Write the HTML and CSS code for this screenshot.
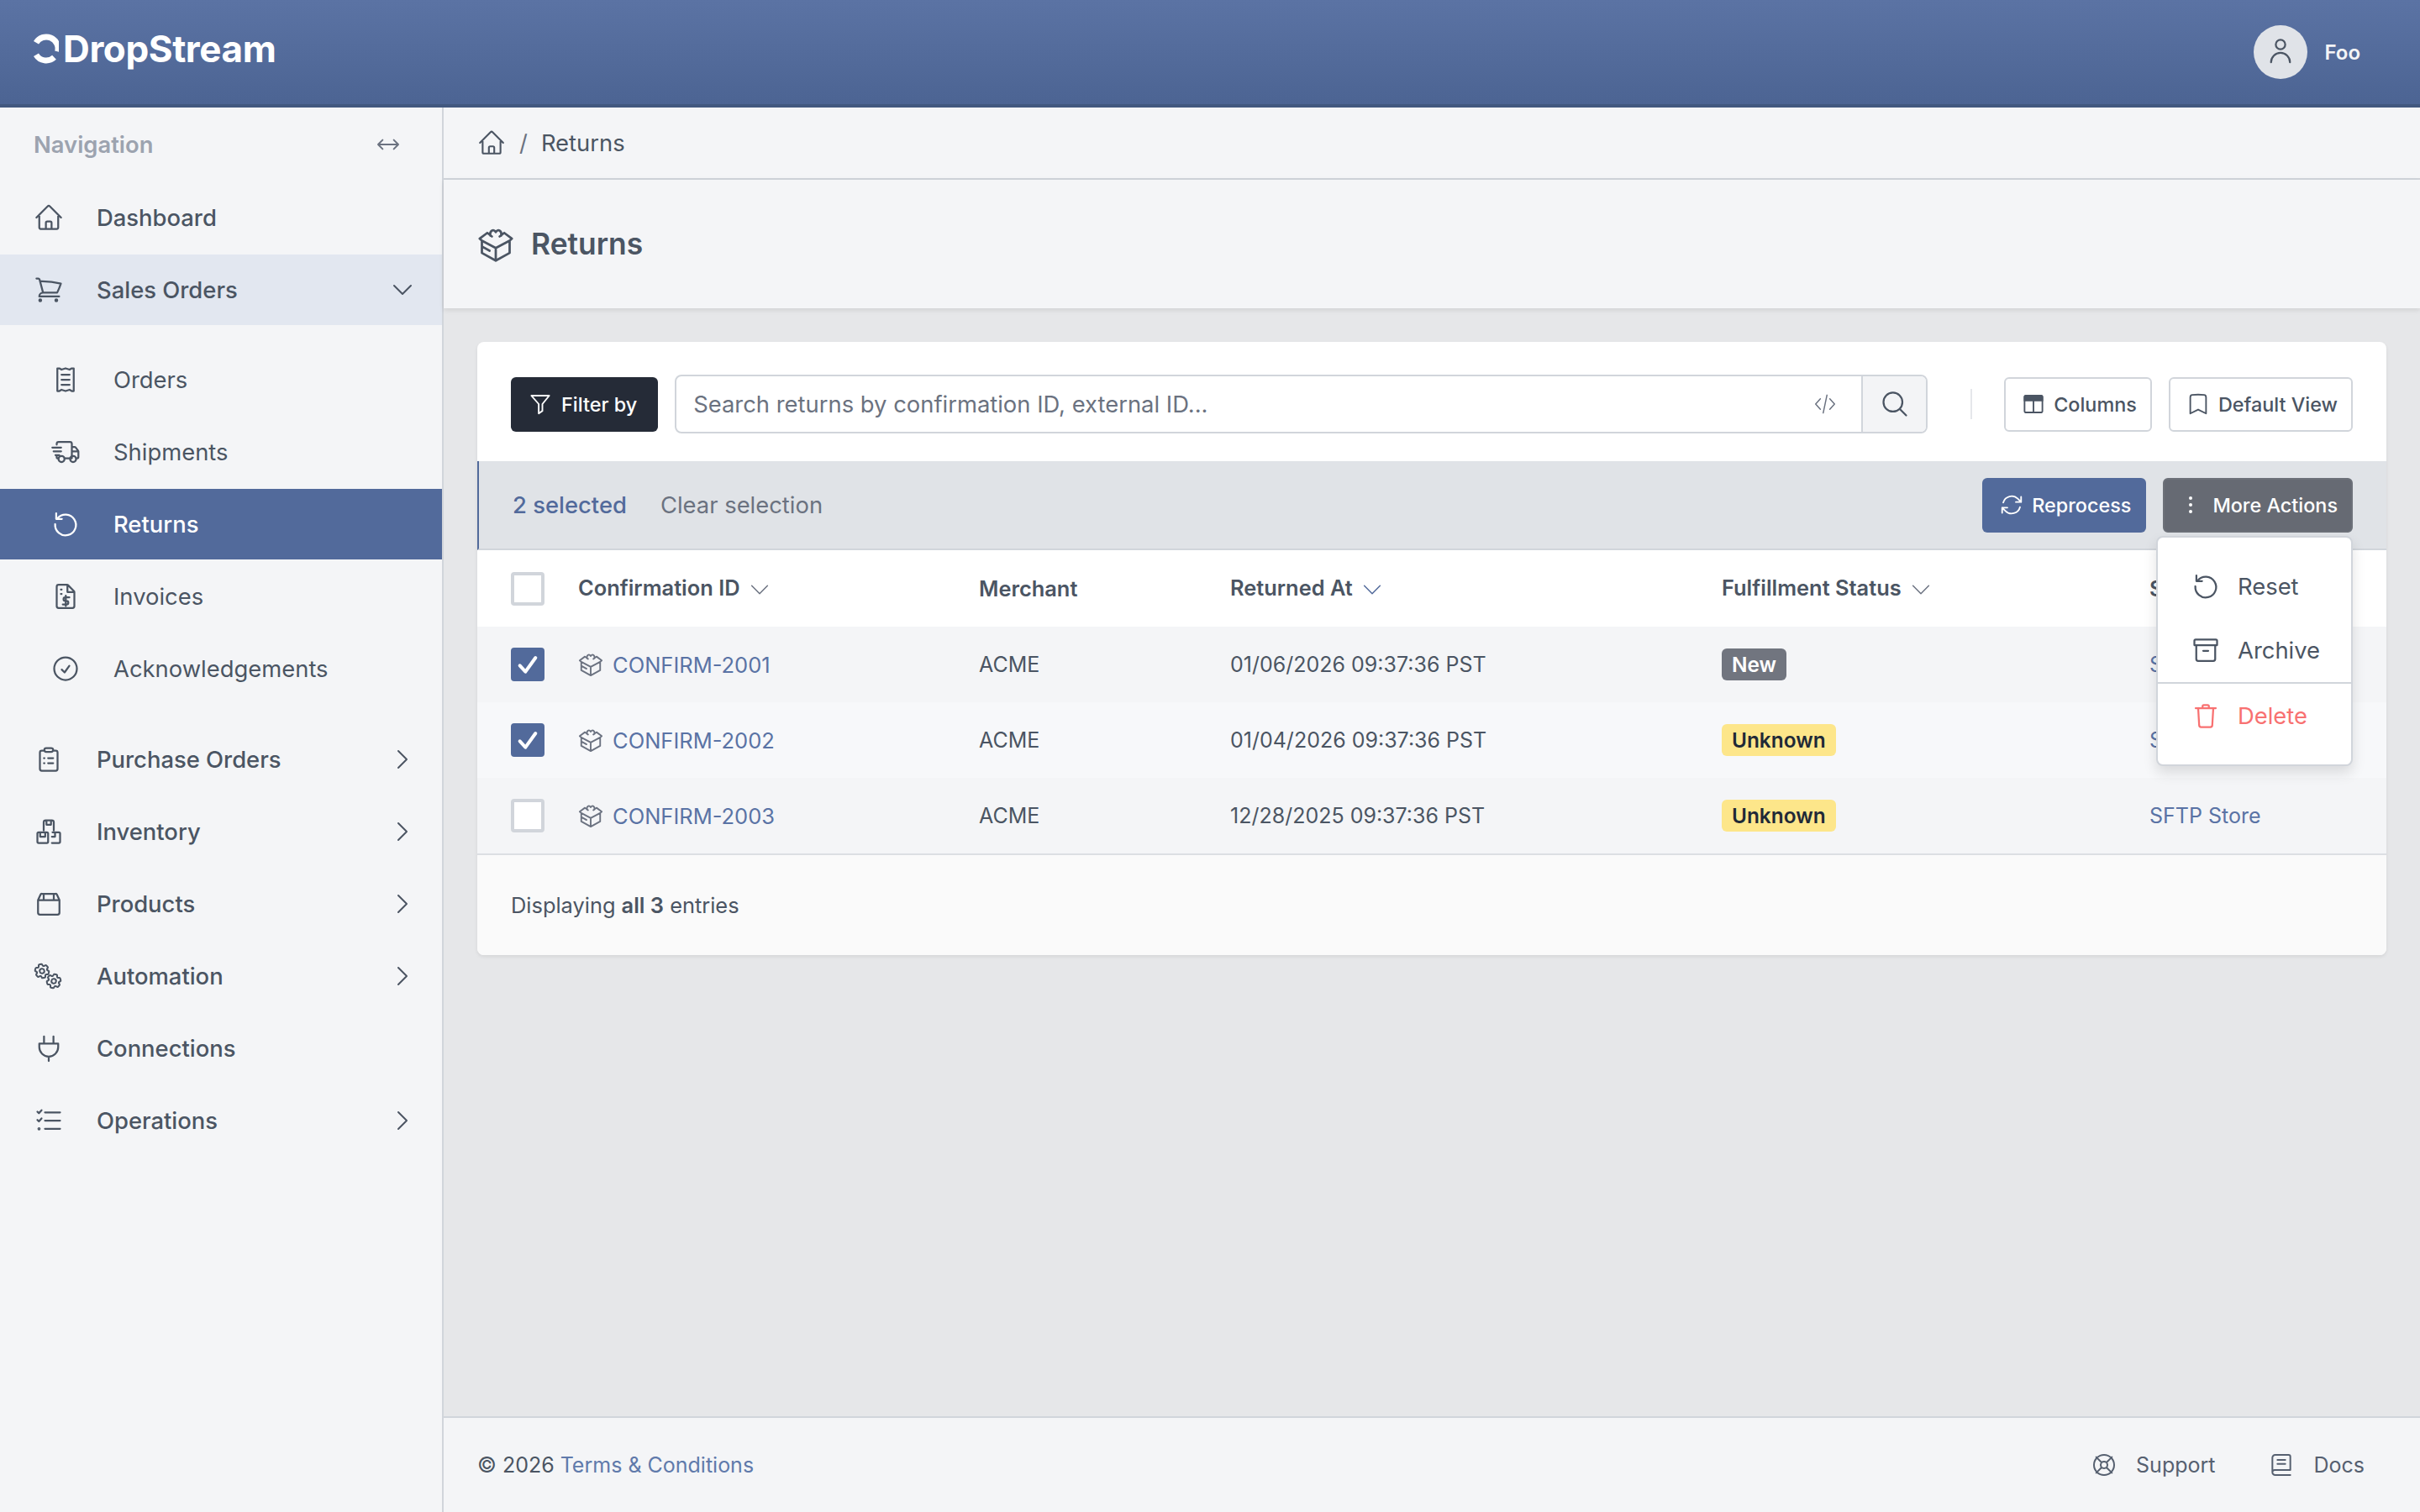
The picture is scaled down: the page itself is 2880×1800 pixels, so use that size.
FILE: index.html
```html
<!DOCTYPE html>
<html lang="en">
<head>
    <meta charset="UTF-8">
    <title>Returns - DropStream</title>
    <link rel="stylesheet" href="styles.css">
</head>
<body>
    <!-- icon sprite -->
    <svg class="icon-defs" xmlns="http://www.w3.org/2000/svg">
        <symbol id="i-home" viewBox="0 0 24 24"><path d="m2.25 12 8.954-8.955c.44-.439 1.152-.439 1.591 0L21.75 12M4.5 9.75v10.125c0 .621.504 1.125 1.125 1.125H9.75v-4.875c0-.621.504-1.125 1.125-1.125h2.25c.621 0 1.125.504 1.125 1.125V21h4.125c.621 0 1.125-.504 1.125-1.125V9.75M8.25 21h8.25"/></symbol>
        <symbol id="i-cart" viewBox="0 0 24 24"><path d="M2.25 3h1.386c.51 0 .955.343 1.087.835l.383 1.437M7.5 14.25a3 3 0 0 0-3 3h15.75m-12.75-3h11.218c1.121-2.3 2.1-4.684 2.924-7.138a60.114 60.114 0 0 0-16.536-1.84M7.5 14.25 5.106 5.272M6 20.25a.75.75 0 1 1-1.5 0 .75.75 0 0 1 1.5 0Zm12.75 0a.75.75 0 1 1-1.5 0 .75.75 0 0 1 1.5 0Z"/></symbol>
        <symbol id="i-receipt" viewBox="0 0 24 24"><path d="M5.5 3h1.6l1.7 1L12 3l3.2 1 1.7-1h1.6v18h-1.6l-1.7-1-3.2 1-3.2-1-1.7 1H5.5zM8.8 8h6.4M8.8 12h6.4M8.8 16h6.4"/></symbol>
        <symbol id="i-truck" viewBox="0 0 24 24"><path d="M5 6.2V5.5A1.5 1.5 0 0 1 6.5 4h9A1.5 1.5 0 0 1 17 5.5V17h-5.5M5 15v1.5a.5.5 0 0 0 .5.5H6M17 8h2.2a1 1 0 0 1 .8.4l2 2.7a1 1 0 0 1 .2.6v4.3a1 1 0 0 1-1 1h-.7M17 11.5h5M1.5 8.5h7M2.5 11.5h6M4 14.5h3"/><circle cx="8.8" cy="17.6" r="2.4"/><circle cx="18" cy="17.6" r="2.4"/></symbol>
        <symbol id="i-return" viewBox="0 0 24 24"><path d="M5.6 7.4A8.25 8.25 0 1 1 3.75 12M4.6 3.4v4.5h4.5"/></symbol>
        <symbol id="i-invoice" viewBox="0 0 24 24"><path d="M6.5 2.8h6.8a1 1 0 0 1 .7.3l4.7 4.7a1 1 0 0 1 .3.7v11.2a1.5 1.5 0 0 1-1.5 1.5h-11A1.5 1.5 0 0 1 5 19.7V4.3a1.5 1.5 0 0 1 1.5-1.5zM13.5 3v5.5H19M8.3 6.5h.6M8.3 10h.6M15 12.8h-3.2a1.4 1.4 0 0 0 0 2.8h1a1.4 1.4 0 0 1 0 2.8H9.8M12.2 11.4v8.2"/></symbol>
        <symbol id="i-check-circle" viewBox="0 0 24 24"><path d="M9 12.75 11.25 15 15 9.75M21 12a9 9 0 1 1-18 0 9 9 0 0 1 18 0Z"/></symbol>
        <symbol id="i-clipboard" viewBox="0 0 24 24"><path d="M8.5 5H6.5A1.5 1.5 0 0 0 5 6.5v13A1.5 1.5 0 0 0 6.5 21h11a1.5 1.5 0 0 0 1.5-1.5v-13A1.5 1.5 0 0 0 17.5 5h-2M8.5 4.5A1.5 1.5 0 0 1 10 3h4a1.5 1.5 0 0 1 1.5 1.5v0A1.5 1.5 0 0 1 14 6h-4a1.5 1.5 0 0 1-1.5-1.5zM11.5 11h4M11.5 15h4M8.2 11h.4M8.2 15h.4"/></symbol>
        <symbol id="i-boxes" viewBox="0 0 24 24"><path d="M8 11V4.5A1.5 1.5 0 0 1 9.5 3h5A1.5 1.5 0 0 1 16 4.5V11M10.2 3v3.5h3.6V3M3 13.5a1 1 0 0 1 1-1h6.5a1 1 0 0 1 1 1V20a1 1 0 0 1-1 1H4a1 1 0 0 1-1-1zM5.2 12.5V16h4v-3.5M15 12.5h5a1 1 0 0 1 1 1V20a1 1 0 0 1-1 1h-5.5M17 12.5V16h-2.5"/></symbol>
        <symbol id="i-box" viewBox="0 0 24 24"><path d="M6.5 4h11a1 1 0 0 1 1 .7L20.5 9v10a1.5 1.5 0 0 1-1.5 1.5H5A1.5 1.5 0 0 1 3.5 19V9l2-4.3a1 1 0 0 1 1-.7zM3.5 9h17M8 4v5M16 4v5"/></symbol>
        <symbol id="i-cog" viewBox="0 0 24 24"><path d="M9.594 3.94c.09-.542.56-.94 1.11-.94h2.593c.55 0 1.02.398 1.11.94l.213 1.281c.063.374.313.686.645.87.074.04.147.083.22.127.325.196.72.257 1.075.124l1.217-.456a1.125 1.125 0 0 1 1.37.49l1.296 2.247a1.125 1.125 0 0 1-.26 1.431l-1.003.827c-.293.241-.438.613-.43.992a7.723 7.723 0 0 1 0 .255c-.008.378.137.75.43.991l1.004.827c.424.35.534.955.26 1.43l-1.298 2.247a1.125 1.125 0 0 1-1.369.491l-1.217-.456c-.355-.133-.75-.072-1.076.124a6.47 6.47 0 0 1-.22.128c-.331.183-.581.495-.644.869l-.213 1.281c-.09.543-.56.94-1.11.94h-2.594c-.55 0-1.019-.398-1.11-.94l-.213-1.281c-.062-.374-.312-.686-.644-.87a6.52 6.52 0 0 1-.22-.127c-.325-.196-.72-.257-1.076-.124l-1.217.456a1.125 1.125 0 0 1-1.369-.49l-1.297-2.247a1.125 1.125 0 0 1 .26-1.431l1.004-.827c.292-.24.437-.613.43-.991a6.932 6.932 0 0 1 0-.255c.007-.38-.138-.751-.43-.992l-1.004-.827a1.125 1.125 0 0 1-.26-1.43l1.297-2.247a1.125 1.125 0 0 1 1.37-.491l1.216.456c.356.133.751.072 1.076-.124.072-.044.146-.086.22-.128.332-.183.582-.495.644-.869l.214-1.28Z"/><path d="M15 12a3 3 0 1 1-6 0 3 3 0 0 1 6 0Z"/></symbol>
        <symbol id="i-cogs" viewBox="0 0 36 36"><use href="#i-cog" x="-1" y="1" width="22" height="22" stroke-width="2.2" transform="rotate(-15 10 12)"/><use href="#i-cog" x="13" y="13" width="22" height="22" stroke-width="2.2" transform="rotate(15 24 24)"/></symbol>
        <symbol id="i-plug" viewBox="0 0 24 24"><path d="M4.5 8.25h15V11a7.5 7.5 0 0 1-15 0zM8.25 2.5v5.75M15.75 2.5v5.75M12 18.5V22"/></symbol>
        <symbol id="i-checklist" viewBox="0 0 24 24"><path d="M9 5.5h12M9 12h12M9 18.5h12M3 5l1.2 1.2L6.3 3.8M3 11.5l1.2 1.2 2.1-2.4"/><circle cx="4.3" cy="18.5" r=".5"/></symbol>
        <symbol id="i-right" viewBox="0 0 24 24"><path d="m8.25 4.5 7.5 7.5-7.5 7.5"/></symbol>
        <symbol id="i-down" viewBox="0 0 24 24"><path d="m19.5 8.25-7.5 7.5-7.5-7.5"/></symbol>
        <symbol id="i-leftright" viewBox="0 0 24 24"><path d="M3 12h18M7 8l-4 4 4 4M17 8l4 4-4 4"/></symbol>
        <symbol id="i-package" viewBox="0 0 24 24"><path d="M12 22.5 3 17.5v-8l9 4.8 9-4.800v8zM12 14.300v8.200M3 9.500 1.500 8.200l5-3.700 3 2.300M21 9.500l1.500-1.300-5-3.700-3 2.300M3 13.300l5 2.800M8.500 6.300C7.800 3.200 10.500 1.500 12 4c1.500-2.500 4.200-.8 3.500 2.300"/></symbol>
        <symbol id="i-filter" viewBox="0 0 24 24"><path d="M3.5 4h17L14 12v6.500L10.500 21v-9z"/></symbol>
        <symbol id="i-code" viewBox="0 0 24 24"><path d="M7.500 7 3 12l4.500 5M16.500 7 21 12l-4.500 5M13.800 3.500l-3.600 17"/></symbol>
        <symbol id="i-search" viewBox="0 0 24 24"><path d="m21 21-5.197-5.197m0 0A7.5 7.5 0 1 0 5.196 5.196a7.5 7.5 0 0 0 10.607 10.607Z"/></symbol>
        <symbol id="i-columns" viewBox="0 0 24 24"><path d="M5 4h14a1.500 1.500 0 0 1 1.500 1.500v13A1.500 1.500 0 0 1 19 20H5a1.500 1.500 0 0 1-1.500-1.500v-13A1.500 1.500 0 0 1 5 4zM12 8.500V20"/><path class="icon-solid" d="M3.500 5.500A1.500 1.500 0 0 1 5 4h14a1.500 1.500 0 0 1 1.500 1.500v3.200h-17z"/></symbol>
        <symbol id="i-bookmark" viewBox="0 0 24 24"><path d="M17.593 3.322c1.1.128 1.907 1.077 1.907 2.185V21L12 17.25 4.5 21V5.507c0-1.108.806-2.057 1.907-2.185a48.507 48.507 0 0 1 11.186 0Z"/></symbol>
        <symbol id="i-refresh" viewBox="0 0 24 24"><path d="M16.023 9.348h4.992v-.001M2.985 19.644v-4.992m0 0h4.992m-4.993 0 3.181 3.183a8.25 8.25 0 0 0 13.803-3.7M4.031 9.865a8.25 8.25 0 0 1 13.803-3.7l3.181 3.182m0-4.991v4.99"/></symbol>
        <symbol id="i-archive" viewBox="0 0 24 24"><path d="M4 3.500h16a1 1 0 0 1 1 1V8H3V4.500a1 1 0 0 1 1-1zM4.500 8v11A1.500 1.500 0 0 0 6 20.500h12a1.500 1.500 0 0 0 1.500-1.500V8M10 12.500h4"/></symbol>
        <symbol id="i-trash" viewBox="0 0 24 24"><path d="M4 6h16M9.500 6V4.500a1 1 0 0 1 1-1h3a1 1 0 0 1 1 1V6M6 6l.8 13.500A1.500 1.500 0 0 0 8.300 21h7.400a1.500 1.500 0 0 0 1.500-1.500L18 6"/></symbol>
        <symbol id="i-user" viewBox="0 0 24 24"><path d="M15.75 6a3.75 3.75 0 1 1-7.5 0 3.75 3.75 0 0 1 7.5 0ZM4.5 20.100a7.500 7.500 0 0 1 15 0"/></symbol>
        <symbol id="i-support" viewBox="0 0 24 24"><path d="M21 12a9 9 0 1 1-18 0 9 9 0 0 1 18 0ZM15 12a3 3 0 1 1-6 0 3 3 0 0 1 6 0ZM5 5l4.800 4.800M19 5l-4.800 4.800M5 19l4.800-4.800M19 19l-4.800-4.800"/></symbol>
        <symbol id="i-book" viewBox="0 0 24 24"><path d="M20 16.500v-12A1.500 1.500 0 0 0 18.500 3h-12A2.500 2.500 0 0 0 4 5.500v13A2.500 2.500 0 0 0 6.500 21H20M4 18.500a2 2 0 0 1 2-2h14M8.500 7.500h7M8.500 11h7"/></symbol>
    </svg>

    <!-- top bar -->
    <header class="topbar">
        <div class="brand">
            <svg class="brand-mark" viewBox="0 0 30 36"><path d="M3 10.800A14 14 0 0 1 28.600 21.400"/><path d="M24.500 28.300A14 14 0 0 1 3 25.200"/></svg>
            <span class="brand-name">DropStream</span>
        </div>
        <div class="account">
            <span class="avatar"><svg class="icon"><use href="#i-user"/></svg></span>
            <span class="account-name">Foo</span>
        </div>
    </header>

    <div class="layout">
        <!-- sidebar -->
        <aside class="sidebar">
            <div class="nav-title">
                <span>Navigation</span>
                <svg class="icon nav-toggle"><use href="#i-leftright"/></svg>
            </div>
            <nav class="nav-list">
                <a class="nav-item"><svg class="icon"><use href="#i-home"/></svg><span>Dashboard</span></a>
                <a class="nav-item nav-open"><svg class="icon"><use href="#i-cart"/></svg><span>Sales Orders</span><svg class="icon nav-chevron"><use href="#i-down"/></svg></a>
                <div class="nav-sub">
                    <a class="nav-item"><svg class="icon"><use href="#i-receipt"/></svg><span>Orders</span></a>
                    <a class="nav-item"><svg class="icon"><use href="#i-truck"/></svg><span>Shipments</span></a>
                    <a class="nav-item nav-active"><svg class="icon"><use href="#i-return"/></svg><span>Returns</span></a>
                    <a class="nav-item"><svg class="icon"><use href="#i-invoice"/></svg><span>Invoices</span></a>
                    <a class="nav-item"><svg class="icon"><use href="#i-check-circle"/></svg><span>Acknowledgements</span></a>
                </div>
                <a class="nav-item"><svg class="icon"><use href="#i-clipboard"/></svg><span>Purchase Orders</span><svg class="icon nav-chevron"><use href="#i-right"/></svg></a>
                <a class="nav-item"><svg class="icon"><use href="#i-boxes"/></svg><span>Inventory</span><svg class="icon nav-chevron"><use href="#i-right"/></svg></a>
                <a class="nav-item"><svg class="icon"><use href="#i-box"/></svg><span>Products</span><svg class="icon nav-chevron"><use href="#i-right"/></svg></a>
                <a class="nav-item"><svg class="icon"><use href="#i-cogs"/></svg><span>Automation</span><svg class="icon nav-chevron"><use href="#i-right"/></svg></a>
                <a class="nav-item"><svg class="icon"><use href="#i-plug"/></svg><span>Connections</span></a>
                <a class="nav-item"><svg class="icon"><use href="#i-checklist"/></svg><span>Operations</span><svg class="icon nav-chevron"><use href="#i-right"/></svg></a>
            </nav>
        </aside>

        <main class="main">
            <div class="breadcrumb">
                <svg class="icon"><use href="#i-home"/></svg>
                <span class="crumb-sep">/</span>
                <span>Returns</span>
            </div>
            <div class="page-head">
                <svg class="icon page-icon"><use href="#i-package"/></svg>
                <h1>Returns</h1>
            </div>

            <div class="content">
                <section class="card">
                    <div class="toolbar">
                        <button class="btn btn-dark"><svg class="icon btn-icon"><use href="#i-filter"/></svg>Filter by</button>
                        <div class="search">
                            <span class="search-text">Search returns by confirmation ID, external ID...</span>
                            <svg class="icon search-code"><use href="#i-code"/></svg>
                            <span class="search-btn"><svg class="icon"><use href="#i-search"/></svg></span>
                        </div>
                        <span class="toolbar-divider"></span>
                        <button class="btn btn-plain"><svg class="icon btn-icon"><use href="#i-columns"/></svg>Columns</button>
                        <button class="btn btn-plain"><svg class="icon btn-icon"><use href="#i-bookmark"/></svg>Default View</button>
                    </div>

                    <div class="selection-bar">
                        <span class="selected-count">2 selected</span>
                        <span class="selected-clear">Clear selection</span>
                        <div class="selection-actions">
                            <button class="btn btn-primary"><svg class="icon btn-icon"><use href="#i-refresh"/></svg>Reprocess</button>
                            <button class="btn btn-gray"><span class="dots"><i></i><i></i><i></i></span>More Actions</button>
                        </div>
                    </div>

                    <table class="grid">
                        <thead>
                            <tr>
                                <th class="col-check"><span class="check"></span></th>
                                <th class="col-id">Confirmation ID <svg class="icon sort"><use href="#i-down"/></svg></th>
                                <th class="col-merchant">Merchant</th>
                                <th class="col-date">Returned At <svg class="icon sort sort-active"><use href="#i-down"/></svg></th>
                                <th class="col-status">Fulfillment Status <svg class="icon sort"><use href="#i-down"/></svg></th>
                                <th class="col-store">Store</th>
                            </tr>
                        </thead>
                        <tbody>
                            <tr>
                                <td><span class="check check-on"><svg class="icon" viewBox="0 0 24 24"><path d="M5 13l5 5.500L19 6"/></svg></span></td>
                                <td><a class="id-link"><svg class="icon"><use href="#i-package"/></svg>CONFIRM-2001</a></td>
                                <td>ACME</td>
                                <td>01/06/2026 09:37:36 PST</td>
                                <td><span class="badge badge-new">New</span></td>
                                <td><a class="store-link">SFTP Store</a></td>
                            </tr>
                            <tr>
                                <td><span class="check check-on"><svg class="icon" viewBox="0 0 24 24"><path d="M5 13l5 5.500L19 6"/></svg></span></td>
                                <td><a class="id-link"><svg class="icon"><use href="#i-package"/></svg>CONFIRM-2002</a></td>
                                <td>ACME</td>
                                <td>01/04/2026 09:37:36 PST</td>
                                <td><span class="badge badge-unknown">Unknown</span></td>
                                <td><a class="store-link">SFTP Store</a></td>
                            </tr>
                            <tr>
                                <td><span class="check"></span></td>
                                <td><a class="id-link"><svg class="icon"><use href="#i-package"/></svg>CONFIRM-2003</a></td>
                                <td>ACME</td>
                                <td>12/28/2025 09:37:36 PST</td>
                                <td><span class="badge badge-unknown">Unknown</span></td>
                                <td><a class="store-link">SFTP Store</a></td>
                            </tr>
                        </tbody>
                    </table>

                    <div class="card-foot">Displaying <b>all 3</b> entries</div>

                    <!-- open More Actions menu -->
                    <div class="menu">
                        <a class="menu-item"><svg class="icon"><use href="#i-return"/></svg>Reset</a>
                        <a class="menu-item"><svg class="icon"><use href="#i-archive"/></svg>Archive</a>
                        <div class="menu-line"></div>
                        <a class="menu-item menu-danger"><svg class="icon"><use href="#i-trash"/></svg>Delete</a>
                    </div>
                </section>
            </div>

            <footer class="footer">
                <div>© 2026 <a class="terms">Terms &amp; Conditions</a></div>
                <div class="footer-links">
                    <a class="footer-link"><svg class="icon"><use href="#i-support"/></svg>Support</a>
                    <a class="footer-link"><svg class="icon"><use href="#i-book"/></svg>Docs</a>
                </div>
            </footer>
        </main>
    </div>
</body>
</html>
```

FILE: styles.css
```css
* {
    box-sizing: border-box;
}

body, html {
    margin: 0;
    padding: 0;
    height: 100%;
}

body {
    display: flex;
    flex-direction: column;
    height: 1800px;
    overflow: hidden;
    font-family: Inter, "Noto Sans", sans-serif;
    font-size: 27.4px;
    color: #4b5563;
    background: #e6e7e9;
}

.icon-defs {
    display: none;
}

.icon {
    width: 36px;
    height: 36px;
    flex: none;
    fill: none;
    stroke: currentColor;
    stroke-width: 1.5;
    stroke-linecap: round;
    stroke-linejoin: round;
}

.icon-solid {
    fill: currentColor;
}

/* top bar */
.topbar {
    height: 128px;
    flex: none;
    display: flex;
    align-items: center;
    justify-content: space-between;
    padding: 0 71px 0 40px;
    background: linear-gradient(#5b73a4, #4c6493);
    border-bottom: 4px solid #42587f;
}

.brand {
    display: flex;
    align-items: center;
    gap: 5px;
    padding-bottom: 8px;
    color: #fff;
}

.brand-mark {
    width: 30px;
    height: 36px;
    fill: none;
    stroke: #fff;
    stroke-width: 7;
}

.brand-name {
    font-size: 44px;
    font-weight: 700;
    letter-spacing: -0.4px;
    line-height: 1;
}

.account {
    display: flex;
    align-items: center;
    gap: 20px;
}

.avatar {
    width: 64px;
    height: 64px;
    border-radius: 50%;
    display: flex;
    align-items: center;
    justify-content: center;
    background: #e0e3e8;
    color: #4b5563;
}

.account-name {
    font-size: 24px;
    font-weight: 600;
    color: #f3f4f6;
}

/* layout */
.layout {
    flex: 1;
    display: flex;
    min-height: 0;
}

.sidebar {
    width: 528px;
    flex: none;
    background: #f4f5f7;
    border-right: 2px solid #d1d5db;
}

.nav-title {
    height: 89px;
    display: flex;
    align-items: center;
    justify-content: space-between;
    padding: 0 48px 2px 40px;
    font-weight: 600;
    color: #9ca3af;
}

.nav-toggle {
    width: 32px;
    height: 32px;
    color: #6b7280;
}

.nav-list {
    display: flex;
    flex-direction: column;
    gap: 2px;
}

.nav-item {
    height: 84px;
    display: flex;
    align-items: center;
    gap: 39px;
    padding: 0 31px 0 40px;
    font-weight: 500;
    color: #4b5563;
}

.nav-chevron {
    width: 32px;
    height: 32px;
    margin-left: auto;
}

.nav-open {
    background: #e2e7f0;
}

.nav-sub {
    display: flex;
    flex-direction: column;
    gap: 2px;
    padding: 21px 0 22px;
}

.nav-sub .nav-item {
    padding-left: 60px;
    font-weight: 400;
}

.nav-active,
.nav-sub .nav-active {
    background: #526a9b;
    color: #fff;
    font-weight: 500;
}

/* main column */
.main {
    flex: 1;
    min-width: 0;
    display: flex;
    flex-direction: column;
}

.breadcrumb {
    height: 86px;
    flex: none;
    display: flex;
    align-items: center;
    gap: 14px;
    padding-left: 40px;
    background: #f4f5f7;
    border-bottom: 2px solid #d1d5db;
}

.breadcrumb .icon {
    width: 34px;
    height: 34px;
}

.crumb-sep {
    margin: 0 2px;
    color: #6b7280;
}

.page-head {
    height: 153px;
    flex: none;
    display: flex;
    align-items: center;
    gap: 20px;
    padding-left: 40px;
    background: #f4f5f7;
    box-shadow: 0 2px 6px rgba(0, 0, 0, 0.1);
}

.page-icon {
    width: 44px;
    height: 44px;
}

.page-head h1 {
    margin: 0;
    font-size: 35.4px;
    font-weight: 600;
    color: #4b5563;
}

.content {
    flex: 1;
    padding: 40px;
    min-height: 0;
}

.card {
    position: relative;
    background: #fff;
    border-radius: 8px;
    box-shadow: 0 2px 4px rgba(0, 0, 0, 0.08);
}

/* buttons */
.btn {
    height: 65px;
    display: inline-flex;
    align-items: center;
    gap: 9px;
    padding: 0 16px 0 18px;
    font-family: inherit;
    font-size: 23.4px;
    font-weight: 500;
    border-radius: 6px;
    border: 2px solid transparent;
    white-space: nowrap;
}

.btn-icon {
    width: 30px;
    height: 30px;
}

.btn-dark {
    gap: 10px;
    padding-right: 23px;
    background: #252b37;
    color: #fff;
}

.btn-plain {
    background: #fff;
    border-color: #d1d5db;
    color: #4b5563;
}

.btn-primary {
    background: #526a9b;
    color: #fff;
}

.btn-gray {
    background: #666a73;
    border-color: #6d7179;
    color: #fff;
    gap: 24px;
    padding-left: 29px;
}

.dots {
    display: flex;
    flex-direction: column;
    gap: 4px;
}

.dots i {
    width: 4px;
    height: 4px;
    border-radius: 50%;
    background: #fff;
}

/* toolbar */
.toolbar {
    height: 142px;
    display: flex;
    align-items: center;
    gap: 20px;
    padding: 6px 40px 0;
}

.search {
    flex: 1;
    height: 70px;
    display: flex;
    align-items: center;
    border: 2px solid #d1d5db;
    border-radius: 8px;
    overflow: hidden;
}

.search-text {
    flex: 1;
    padding-left: 20px;
    color: #6b7280;
}

.search-code {
    width: 30px;
    height: 30px;
    margin-right: 28px;
    color: #6b7280;
    stroke-width: 1.2;
}

.search-btn {
    width: 77px;
    height: 100%;
    display: flex;
    align-items: center;
    justify-content: center;
    background: #f3f4f6;
    border-left: 2px solid #d1d5db;
}

.toolbar-divider {
    width: 2px;
    height: 36px;
    margin: 0 18px 0 31px;
    background: #e5e7eb;
}

/* selection bar */
.selection-bar {
    height: 106px;
    display: flex;
    align-items: center;
    gap: 40px;
    padding: 0 40px;
    background: #e0e3e7;
    border-left: 2px solid #526a9b;
    border-bottom: 2px solid #d1d5db;
}

.selected-count {
    font-weight: 500;
    color: #526a9b;
}

.selected-clear {
    color: #6b7280;
}

.selection-actions {
    margin-left: auto;
    display: flex;
    gap: 20px;
}

/* table */
.grid {
    width: 100%;
    border-collapse: collapse;
    table-layout: fixed;
    background: #f4f5f7;
    font-size: 25px;
}

.grid th,
.grid td {
    padding: 0;
    text-align: left;
    vertical-align: middle;
}

.grid thead tr {
    height: 91px;
    background: #fff;
}

.grid tbody tr {
    height: 90px;
}

.grid tbody tr:nth-child(2) {
    background: #f7f8fa;
}

.grid th {
    font-size: 25.4px;
    font-weight: 600;
    color: #4b5563;
}

.col-check { width: 120px; }
.col-id { width: 477px; }
.col-merchant { width: 299px; }
.col-date { width: 585px; }
.col-status { width: 509px; }

.check {
    width: 40px;
    height: 40px;
    margin-left: 40px;
    display: flex;
    align-items: center;
    justify-content: center;
    background: #fff;
    border: 4px solid #d1d5db;
    border-radius: 4px;
}

.check-on {
    background: #526a9b;
    border-color: #526a9b;
    color: #fff;
}

.check-on .icon {
    width: 32px;
    height: 32px;
    stroke-width: 3;
}

.sort {
    width: 30px;
    height: 30px;
    margin-left: 2px;
    vertical-align: middle;
    color: #6b7280;
    stroke-width: 1.2;
}

.sort-active {
    color: #526a9b;
}

.id-link {
    display: flex;
    align-items: center;
    gap: 11px;
    font-size: 25.5px;
    color: #5a73a5;
}

.id-link .icon {
    width: 30px;
    height: 30px;
    color: #6b7280;
}

.store-link {
    color: #5a73a5;
}

.badge {
    display: inline-block;
    height: 38px;
    line-height: 38px;
    padding: 0 12px;
    border-radius: 6px;
    font-size: 24.4px;
    font-weight: 600;
}

.badge-new {
    background: #71757f;
    color: #fff;
}

.badge-unknown {
    background: #fde68a;
    color: #1f2937;
}

.card-foot {
    height: 121px;
    line-height: 119px;
    padding: 0 40px;
    font-size: 25.4px;
    background: #fafafa;
    border-top: 2px solid #dcdfe3;
    border-radius: 0 0 8px 8px;
}

.card-foot b {
    font-weight: 600;
}

/* dropdown menu */
.menu {
    position: absolute;
    top: 231px;
    right: 40px;
    width: 234px;
    padding: 20px 0;
    background: #fff;
    border: 2px solid #d1d5db;
    border-radius: 8px;
    box-shadow: 0 8px 16px rgba(0, 0, 0, 0.12);
}

.menu-item {
    height: 76px;
    display: flex;
    align-items: center;
    gap: 20px;
    padding-left: 39px;
    color: #4b5563;
}

.menu-line {
    height: 2px;
    background: #d1d5db;
}

.menu-danger {
    color: #f87171;
}

/* footer */
.footer {
    height: 114px;
    flex: none;
    display: flex;
    align-items: center;
    justify-content: space-between;
    padding: 0 66px 0 40px;
    font-size: 25px;
    background: #f4f5f7;
    border-top: 2px solid #d1d5db;
}

.terms {
    color: #607aab;
}

.footer-links {
    display: flex;
    gap: 63px;
}

.footer-link {
    display: flex;
    align-items: center;
    gap: 22px;
    color: #566070;
}

.footer-link .icon {
    width: 32px;
    height: 32px;
}
```
